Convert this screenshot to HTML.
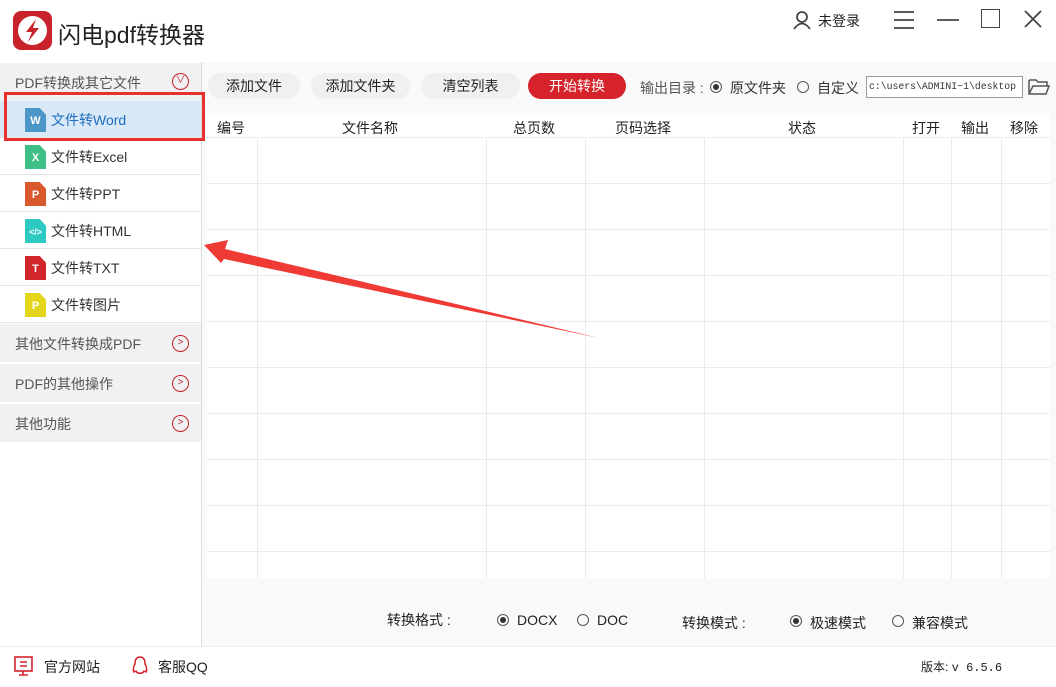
<!DOCTYPE html>
<html><head><meta charset="utf-8"><style>
*{margin:0;padding:0;box-sizing:border-box}
body{width:1056px;height:687px;position:relative;background:#fff;font-family:"Liberation Sans","Noto Sans CJK SC",sans-serif;color:#333;overflow:hidden;font-size:14px}
.a{position:absolute;white-space:nowrap}
.btn{position:absolute;top:73px;height:26px;border-radius:13px;background:#f0f0f0;font-size:14px;line-height:26px;text-align:center;color:#222}
.item{position:absolute;left:0;width:201px;height:37px;border-bottom:1px solid #e6e6e6;background:#fff}
.item span{position:absolute;left:51px;top:9px;font-size:14px;color:#333}
.ic{position:absolute;left:25px;top:7px;width:21px;height:24px;color:#fff;font-size:11px;font-weight:bold;text-align:center;line-height:26px;clip-path:polygon(0 0,70% 0,100% 28%,100% 100%,0 100%)}
.sec{position:absolute;left:0;width:201px;height:38px;background:#f0f1f2;color:#555;font-size:14px}
.sec span{position:absolute;left:15px;top:10px}
.circ{position:absolute;left:172px;top:11px;width:17px;height:17px;border:1.5px solid #c8222a;border-radius:50%;color:#c8222a;font-size:10px;line-height:14px;text-align:center}
.rad{position:absolute;width:12px;height:12px;border:1px solid #555;border-radius:50%}
.rad.on::after{content:"";position:absolute;left:2px;top:2px;width:6px;height:6px;border-radius:50%;background:#333}
</style></head><body>
<!-- title bar -->
<div class="a" style="left:13px;top:11px;width:39px;height:39px;border-radius:8px;background:#c8222a"></div>
<div class="a" style="left:18px;top:16px;width:29px;height:29px;border-radius:50%;background:#fff"></div>
<svg class="a" style="left:13px;top:11px" width="39" height="39"><path d="M23 8 L13 21 L19 21 L15 31 L26 17 L20 17 Z" fill="#c8222a"/></svg>
<div class="a" style="left:58px;top:16px;font-size:23px;color:#222">闪电pdf转换器</div>
<svg class="a" style="left:792px;top:10px" width="20" height="20"><circle cx="10" cy="7" r="5" fill="none" stroke="#444" stroke-width="1.8"/><path d="M2 19 Q10 8 18 19" fill="none" stroke="#444" stroke-width="1.8"/></svg>
<div class="a" style="left:818px;top:11px;font-size:14px;color:#222">未登录</div>
<svg class="a" style="left:894px;top:10px" width="20" height="20"><path d="M0 2H20M0 10H20M0 18H20" stroke="#444" stroke-width="1.8"/></svg>
<svg class="a" style="left:937px;top:10px" width="22" height="20"><path d="M0 10H22" stroke="#444" stroke-width="1.8"/></svg>
<div class="a" style="left:981px;top:9px;width:19px;height:19px;border:1.8px solid #444"></div>
<svg class="a" style="left:1024px;top:10px" width="18" height="18"><path d="M1 1L17 17M17 1L1 17" stroke="#444" stroke-width="1.8"/></svg>

<!-- right panel -->
<div class="a" style="left:202px;top:62px;width:854px;height:584px;background:#f8f9fb"></div>

<!-- sidebar -->
<div class="a" style="left:0;top:62px;width:202px;height:584px;background:#fff;border-right:1px solid #ddd"></div>
<div class="sec" style="top:63px;height:38px"><span>PDF转换成其它文件</span><div class="circ" style="top:10px">∨</div></div>
<div class="item" style="top:101px;background:#d9e9f7"><div class="ic" style="background:#4d97c8">W</div><span style="color:#1e6ec1">文件转Word</span></div>
<div class="item" style="top:138px"><div class="ic" style="background:#3fbf86">X</div><span>文件转Excel</span></div>
<div class="item" style="top:175px"><div class="ic" style="background:#d85a2c">P</div><span>文件转PPT</span></div>
<div class="item" style="top:212px"><div class="ic" style="background:#2ec9c0;font-size:9px">&lt;/&gt;</div><span>文件转HTML</span></div>
<div class="item" style="top:249px"><div class="ic" style="background:#d2262d">T</div><span>文件转TXT</span></div>
<div class="item" style="top:286px"><div class="ic" style="background:#e3d61a">P</div><span>文件转图片</span></div>
<div class="sec" style="top:324px"><span>其他文件转换成PDF</span><div class="circ">&gt;</div></div>
<div class="sec" style="top:364px"><span>PDF的其他操作</span><div class="circ">&gt;</div></div>
<div class="sec" style="top:404px"><span>其他功能</span><div class="circ">&gt;</div></div>
<div class="a" style="left:4px;top:92px;width:201px;height:49px;border:3px solid #e8322f"></div>

<div class="btn" style="left:208px;width:92px">添加文件</div>
<div class="btn" style="left:311px;width:99px">添加文件夹</div>
<div class="btn" style="left:421px;width:99px">清空列表</div>
<div class="btn" style="left:528px;width:98px;background:#d6222a;color:#fff">开始转换</div>
<div class="a" style="left:640px;top:78px;font-size:14px;color:#555">输出目录 :</div>
<div class="rad on" style="left:710px;top:81px"></div>
<div class="a" style="left:730px;top:78px;font-size:14px;color:#333">原文件夹</div>
<div class="rad" style="left:797px;top:81px"></div>
<div class="a" style="left:817px;top:78px;font-size:14px;color:#333">自定义</div>
<div class="a" style="left:866px;top:76px;width:157px;height:22px;border:1px solid #999;background:#fff;font-family:'Liberation Mono',monospace;font-size:9.8px;line-height:20px;padding-left:2px;overflow:hidden">c:\users\ADMINI~1\desktop</div>
<svg class="a" style="left:1028px;top:78px" width="22" height="18"><path d="M1 2H8L10 4H19V8M1 2V16H18L21 8H5L1 16" fill="none" stroke="#555" stroke-width="1.5"/></svg>

<!-- table -->
<div class="a" style="left:207px;top:113px;width:843px;height:465px;background:#fff"></div>
<div class="a" style="left:207px;top:118px;width:843px;font-size:14px;color:#222">
<span class="a" style="left:10px">编号</span><span class="a" style="left:135px">文件名称</span><span class="a" style="left:306px">总页数</span><span class="a" style="left:408px">页码选择</span><span class="a" style="left:581px">状态</span><span class="a" style="left:705px">打开</span><span class="a" style="left:754px">输出</span><span class="a" style="left:803px">移除</span></div>
<svg class="a" style="left:207px;top:113px" width="843" height="465">
<g stroke="#ebebeb" stroke-width="1">
<path d="M0 24.5H843M0 70.5H843M0 116.5H843M0 162.5H843M0 208.5H843M0 254.5H843M0 300.5H843M0 346.5H843M0 392.5H843M0 438.5H843"/>
<path d="M50.5 24V465M279.5 24V465M378.5 24V465M497.5 24V465M696.5 24V465M744.5 24V465M794.5 24V465"/>
</g></svg>

<!-- bottom options -->
<div class="a" style="left:387px;top:610px;font-size:14px;color:#222">转换格式 :</div>
<div class="rad on" style="left:497px;top:614px"></div>
<div class="a" style="left:517px;top:612px;font-size:14px;color:#222">DOCX</div>
<div class="rad" style="left:577px;top:614px"></div>
<div class="a" style="left:597px;top:612px;font-size:14px;color:#222">DOC</div>
<div class="a" style="left:682px;top:613px;font-size:14px;color:#222">转换模式 :</div>
<div class="rad on" style="left:790px;top:615px"></div>
<div class="a" style="left:810px;top:613px;font-size:14px;color:#222">极速模式</div>
<div class="rad" style="left:892px;top:615px"></div>
<div class="a" style="left:912px;top:613px;font-size:14px;color:#222">兼容模式</div>

<!-- footer -->
<div class="a" style="left:0;top:646px;width:1056px;height:41px;background:#fff;border-top:1px solid #eee"></div>
<svg class="a" style="left:14px;top:656px" width="20" height="20"><rect x="1" y="1" width="17" height="14" fill="none" stroke="#d6222a" stroke-width="1.6"/><path d="M6 6H13M6 10H13M9 15V19M5 19H14" stroke="#d6222a" stroke-width="1.6"/></svg>
<div class="a" style="left:44px;top:657px;font-size:14px;color:#222">官方网站</div>
<svg class="a" style="left:131px;top:656px" width="18" height="20"><path d="M9 1C4 1 4 6 4 8C2 11 2 15 3 16L5 15C6 18 12 18 13 15L15 16C16 15 16 11 14 8C14 6 14 1 9 1Z" fill="none" stroke="#d6222a" stroke-width="1.5"/></svg>
<div class="a" style="left:158px;top:657px;font-size:14px;color:#222">客服QQ</div>
<div class="a" style="left:921px;top:658px;font-size:12px;color:#222">版本: <span style="font-family:'Liberation Mono',monospace">v 6.5.6</span></div>

<!-- arrow -->
<svg class="a" style="left:0;top:0" width="1056" height="687"><polygon points="204,245 228,240 225,249 599,338 224,259 221,263" fill="#f03a36"/></svg>
</body></html>
